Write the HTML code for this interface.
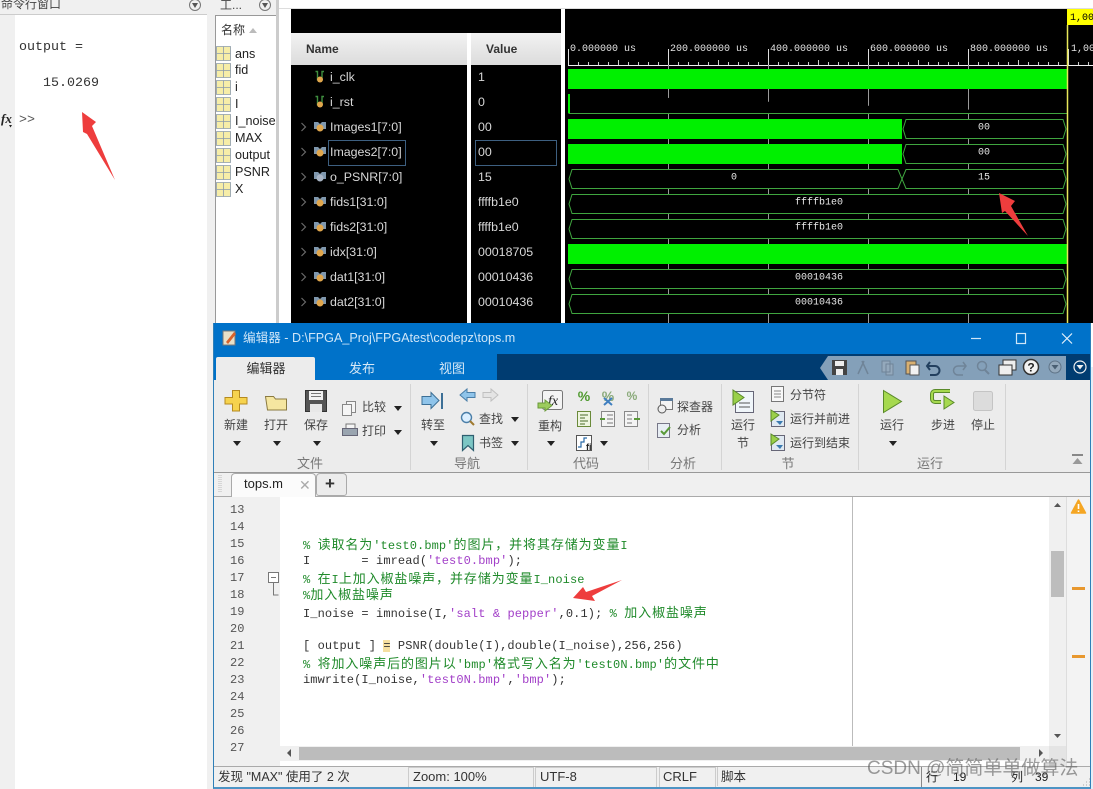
<!DOCTYPE html>
<html><head><meta charset="utf-8"><style>
html,body{margin:0;padding:0}
body{width:1093px;height:789px;position:relative;overflow:hidden;background:#fff;font-family:"Liberation Sans","Noto Sans CJK SC",sans-serif}
div,span.a{position:absolute}
.t{position:absolute;white-space:pre;line-height:16px;height:16px}
.c{transform:translateX(-50%)}
.r{font-size:12px;color:#444}
.g{font-size:13px;color:#777}
.n{font-size:12.4px;color:#d8d8d8}
.w{font-size:12.6px;color:#222}
.m{font-family:"Liberation Mono","Noto Sans CJK SC",monospace;font-size:12px;letter-spacing:.1px;color:#333}
.ln{font-family:"Liberation Mono",monospace;font-size:12px;color:#555;left:230px}
.k{color:#1f8a2a}
.s{color:#a23fc8}
.z{font-size:13px;letter-spacing:.9px;font-family:"Noto Sans CJK SC",sans-serif}
.st{font-size:13px;color:#333}
svg{position:absolute;left:0;top:0}
</style></head><body>

<!-- Left panel -->
<div style="left:0;top:0;width:207px;height:789px;background:#fff"></div>
<div style="left:0;top:0;width:15px;height:789px;background:#f0f0f0"></div>
<div style="left:0;top:0;width:207px;height:14px;background:#f0f0f0;border-bottom:1px solid #ccc"></div>
<div class="t" style="left:1px;top:-4px;font-size:12px;color:#444">命令行窗口</div>
<div class="t" style="left:19px;top:40px;font:13.33px/16px 'Liberation Mono',monospace;color:#333">output =</div>
<div class="t" style="left:43px;top:76px;font:13.33px/16px 'Liberation Mono',monospace;color:#333">15.0269</div>
<div class="t" style="left:19px;top:113px;font:13.33px/16px 'Liberation Mono',monospace;color:#555">&gt;&gt;</div>
<div class="t" style="left:1px;top:111px;font:italic bold 13px/16px 'Liberation Serif',serif;color:#222">fx</div>

<!-- Workspace -->
<div style="left:207px;top:0;width:70px;height:789px;background:#f0f0f0"></div>
<div class="t" style="left:220px;top:-3px;font-size:12px;color:#444">工...</div>
<div style="left:215px;top:15px;width:60px;height:307px;background:#fff;border:1px solid #999;border-bottom:0"></div>
<div class="t" style="left:221px;top:22px;font-size:12px;color:#333">名称</div>
<div style="left:249px;top:28px;width:0;height:0;border:4px solid transparent;border-top:0;border-bottom:5px solid #bbb"></div>
<div class="t w" style="left:235px;top:46px">ans</div>
<div class="t w" style="left:235px;top:62px">fid</div>
<div class="t w" style="left:235px;top:79px">i</div>
<div class="t w" style="left:235px;top:96px">I</div>
<div class="t w" style="left:235px;top:113px">I_noise</div>
<div class="t w" style="left:235px;top:130px">MAX</div>
<div class="t w" style="left:235px;top:147px">output</div>
<div class="t w" style="left:235px;top:164px">PSNR</div>
<div class="t w" style="left:235px;top:181px">X</div>
<div style="left:276px;top:0;width:3px;height:323px;background:#ccc"></div>

<!-- Waveform window -->
<div style="left:279px;top:0;width:814px;height:9px;background:#fff;border-bottom:1px solid #ddd;box-sizing:border-box"></div>
<div style="left:291px;top:9px;width:802px;height:314px;background:#000"></div>
<div style="left:467px;top:33px;width:4px;height:290px;background:#fff"></div>
<div style="left:561px;top:9px;width:4px;height:314px;background:#fff"></div>
<div style="left:291px;top:33px;width:176px;height:32px;background:linear-gradient(#f2f2f2,#dcdcdc)"></div>
<div style="left:471px;top:33px;width:90px;height:32px;background:linear-gradient(#f2f2f2,#dcdcdc)"></div>
<div class="t" style="left:306px;top:41px;font-size:12px;font-weight:bold;color:#333">Name</div>
<div class="t" style="left:486px;top:41px;font-size:12px;font-weight:bold;color:#333">Value</div>

<div class="t n" style="left:330px;top:69px">i_clk</div>
<div class="t n" style="left:330px;top:94px">i_rst</div>
<div class="t n" style="left:330px;top:119px">Images1[7:0]</div>
<div class="t n" style="left:330px;top:144px">Images2[7:0]</div>
<div class="t n" style="left:330px;top:169px">o_PSNR[7:0]</div>
<div class="t n" style="left:330px;top:194px">fids1[31:0]</div>
<div class="t n" style="left:330px;top:219px">fids2[31:0]</div>
<div class="t n" style="left:330px;top:244px">idx[31:0]</div>
<div class="t n" style="left:330px;top:269px">dat1[31:0]</div>
<div class="t n" style="left:330px;top:294px">dat2[31:0]</div>

<div class="t n" style="left:478px;top:69px">1</div>
<div class="t n" style="left:478px;top:94px">0</div>
<div class="t n" style="left:478px;top:119px">00</div>
<div class="t n" style="left:478px;top:144px">00</div>
<div class="t n" style="left:478px;top:169px">15</div>
<div class="t n" style="left:478px;top:194px">ffffb1e0</div>
<div class="t n" style="left:478px;top:219px">ffffb1e0</div>
<div class="t n" style="left:478px;top:244px">00018705</div>
<div class="t n" style="left:478px;top:269px">00010436</div>
<div class="t n" style="left:478px;top:294px">00010436</div>
<div style="left:328px;top:140px;width:76px;height:24px;border:1px solid #3d5f80"></div>
<div style="left:475px;top:140px;width:80px;height:24px;border:1px solid #3d5f80"></div>

<svg width="1093" height="789" viewBox="0 0 1093 789" font-family="Liberation Mono, monospace" font-size="10">
 <!-- signal icons -->
 <g fill="none" stroke="#6a6a6a" stroke-width="1.2">
  <path d="M301.500 123l4 4-4 4M301.500 148l4 4-4 4M301.500 173l4 4-4 4M301.500 198l4 4-4 4M301.500 223l4 4-4 4M301.500 248l4 4-4 4M301.500 273l4 4-4 4M301.500 298l4 4-4 4"/>
 </g>
 <g fill="none" stroke="#3f8f3f" stroke-width="1.400"><path d="M315.500 71.500h2v9M324 71.500h-2v9M315.500 96.500h2v9M324 96.500h-2v9"/></g>
 <g fill="#e0a64c"><circle cx="320" cy="79.500" r="3"/><circle cx="320" cy="104.500" r="3"/></g>
 <g fill="#7f97ad">
  <path d="M314 122h4l2 2 2-2h4v7h-12zM314 147h4l2 2 2-2h4v7h-12zM314 172h4l2 2 2-2h4v7h-12zM314 197h4l2 2 2-2h4v7h-12zM314 222h4l2 2 2-2h4v7h-12zM314 247h4l2 2 2-2h4v7h-12zM314 272h4l2 2 2-2h4v7h-12zM314 297h4l2 2 2-2h4v7h-12z"/>
 </g>
 <g fill="#e0a64c">
  <circle cx="320" cy="128" r="3.500"/><circle cx="320" cy="153" r="3.500"/><circle cx="320" cy="203" r="3.500"/><circle cx="320" cy="228" r="3.500"/><circle cx="320" cy="253" r="3.500"/><circle cx="320" cy="278" r="3.500"/><circle cx="320" cy="303" r="3.500"/>
 </g>
 <circle cx="320" cy="178" r="3.500" fill="#a8b4c4"/>

 <!-- timeline -->
 <path d="M568 65.500H1093" stroke="#eee"/>
 <path d="M568.500 49V65M668.500 49V65M768.500 49V65M868.500 49V65M968.500 49V65M1068.500 49V65" stroke="#ddd"/>
 <path d="M578.500 62V65M588.500 62V65M598.500 62V65M608.500 62V65M618.500 60V65M628.500 62V65M638.500 62V65M648.500 62V65M658.500 62V65M678.500 62V65M688.500 62V65M698.500 62V65M708.500 62V65M718.500 60V65M728.500 62V65M738.500 62V65M748.500 62V65M758.500 62V65M778.500 62V65M788.500 62V65M798.500 62V65M808.500 62V65M818.500 60V65M828.500 62V65M838.500 62V65M848.500 62V65M858.500 62V65M878.500 62V65M888.500 62V65M898.500 62V65M908.500 62V65M918.500 60V65M928.500 62V65M938.500 62V65M948.500 62V65M958.500 62V65M978.500 62V65M988.500 62V65M998.500 62V65M1008.500 62V65M1018.500 60V65M1028.500 62V65M1038.500 62V65M1048.500 62V65M1058.500 62V65M1078.500 62V65M1088.500 62V65" stroke="#ccc"/>
 <g fill="#e4e4e4">
  <text x="570" y="51">0.000000 us</text><text x="670" y="51">200.000000 us</text><text x="770" y="51">400.000000 us</text><text x="870" y="51">600.000000 us</text><text x="970" y="51">800.000000 us</text><text x="1071" y="51">1,000</text>
 </g>
 <!-- grid -->
 <path d="M668.500 65V323M768.500 65V323M868.500 65V323M968.500 65V323" stroke="#9a9a9a"/>
 <!-- signals -->
 <g fill="#00f000">
  <rect x="568" y="69" width="499" height="20"/>
  <rect x="568" y="119" width="334" height="20"/>
  <rect x="568" y="144" width="334" height="20"/>
  <rect x="568" y="244" width="499" height="20"/>
 </g>
 <g fill="#000" stroke="#3fa53f" stroke-width="1">
  <path d="M569 94V113.500H1067" />
  <path d="M903 129l3-9.500H1063l3 9.500-3 9.500H906z"/>
  <path d="M903 154l3-9.500H1063l3 9.500-3 9.500H906z"/>
  <path d="M569 179l3-9.500H898l4 9.500-4 9.500H572z"/>
  <path d="M902 179l4-9.500H1063l3 9.500-3 9.500H906z"/>
  <path d="M569 204l3-9.500H1063l3 9.500-3 9.500H572z"/>
  <path d="M569 229l3-9.500H1063l3 9.500-3 9.500H572z"/>
  <path d="M569 279l3-9.500H1063l3 9.500-3 9.500H572z"/>
  <path d="M569 304l3-9.500H1063l3 9.500-3 9.500H572z"/>
 </g>
 <path d="M569 94V113" stroke="#00f000" stroke-width="2"/>
 <g fill="#e8e8e8" text-anchor="middle">
  <text x="984" y="129.500">00</text><text x="984" y="154.500">00</text><text x="734" y="179.500">0</text><text x="984" y="179.500">15</text>
  <text x="819" y="204.500">ffffb1e0</text><text x="819" y="229.500">ffffb1e0</text><text x="819" y="279.500">00010436</text><text x="819" y="304.500">00010436</text>
 </g>
 <path d="M1067.500 25V323" stroke="#e8e85a" stroke-width="1.500"/>
 <rect x="1067" y="9" width="26" height="16" fill="#ffff00"/>
 <text x="1070" y="20" fill="#000">1,00</text>
 <!-- dropdown circles -->
 <g fill="none" stroke="#777">
  <circle cx="195" cy="5" r="5.500"/><circle cx="265" cy="5" r="5.500"/>
 </g>
 <path d="M192 3h6l-3 5zM262 3h6l-3 5z" fill="#555"/>
 <!-- variable icons -->
 <g id="v" fill="#f6eda8" stroke="#8a9aaa" stroke-width=".8">
  <path d="M216.500 46.500h14v14h-14zM216.500 63.500h14v14h-14zM216.500 80.500h14v14h-14zM216.500 97.500h14v14h-14zM216.500 114.500h14v14h-14zM216.500 131.500h14v14h-14zM216.500 148.500h14v14h-14zM216.500 165.500h14v14h-14zM216.500 182.500h14v14h-14z"/>
  <path fill="none" d="M216.500 53.500h14M223.500 46.500v14M216.500 70.500h14M223.500 63.500v14M216.500 87.500h14M223.500 80.500v14M216.500 104.500h14M223.500 97.500v14M216.500 121.500h14M223.500 114.500v14M216.500 138.500h14M223.500 131.500v14M216.500 155.500h14M223.500 148.500v14M216.500 172.500h14M223.500 165.500v14M216.500 189.500h14M223.500 182.500v14"/>
 </g>
 <path d="M9 125l3 0-1.500 2.500z" fill="#222"/>
</svg>

<!-- Editor window -->
<div style="left:1091px;top:367px;width:2px;height:422px;background:#e6eef6"></div>
<div style="left:213px;top:323px;width:878px;height:466px;background:#f0f0f0;box-sizing:border-box;border-left:1px solid #2f7fb8;border-right:1px solid #2f7fb8;border-bottom:2px solid #4d94c4"></div>
<div style="left:214px;top:323px;width:876px;height:31px;background:#0072c9"></div>
<div style="left:214px;top:354px;width:876px;height:26px;background:#0072c9"></div>
<div style="left:497px;top:354px;width:593px;height:26px;background:#003c71"></div>
<div style="left:828px;top:356px;width:238px;height:24px;background:#84a0b9"></div>
<div style="left:216px;top:357px;width:99px;height:23px;background:#ececec;border-radius:2px 2px 0 0"></div>
<div class="t" style="left:243px;top:330px;font-size:12.6px;color:#cfe6f8">编辑器 - D:\FPGA_Proj\FPGAtest\codepz\tops.m</div>
<div class="t c" style="left:266px;top:361px;font-size:13px;color:#333">编辑器</div>
<div class="t c" style="left:362px;top:361px;font-size:13px;color:#d6e8f6">发布</div>
<div class="t c" style="left:452px;top:361px;font-size:13px;color:#d6e8f6">视图</div>

<!-- Ribbon -->
<div style="left:214px;top:380px;width:876px;height:92px;background:#ececec;border-bottom:1px solid #999"></div>
<div style="left:410px;top:384px;width:1px;height:86px;background:#d4d4d4"></div>
<div style="left:527px;top:384px;width:1px;height:86px;background:#d4d4d4"></div>
<div style="left:648px;top:384px;width:1px;height:86px;background:#d4d4d4"></div>
<div style="left:721px;top:384px;width:1px;height:86px;background:#d4d4d4"></div>
<div style="left:858px;top:384px;width:1px;height:86px;background:#d4d4d4"></div>
<div style="left:1005px;top:384px;width:1px;height:86px;background:#d4d4d4"></div>

<div class="t r c" style="left:236px;top:417px">新建</div>
<div class="t r c" style="left:276px;top:417px">打开</div>
<div class="t r c" style="left:316px;top:417px">保存</div>
<div class="t r" style="left:362px;top:399px">比较</div>
<div class="t r" style="left:362px;top:423px">打印</div>
<div class="t g c" style="left:310px;top:456px">文件</div>
<div class="t r c" style="left:433px;top:417px">转至</div>
<div class="t r" style="left:479px;top:411px">查找</div>
<div class="t r" style="left:479px;top:435px">书签</div>
<div class="t g c" style="left:467px;top:456px">导航</div>
<div class="t r c" style="left:550px;top:418px">重构</div>
<div class="t g c" style="left:586px;top:456px">代码</div>
<div class="t r" style="left:677px;top:399px">探查器</div>
<div class="t r" style="left:677px;top:422px">分析</div>
<div class="t g c" style="left:683px;top:456px">分析</div>
<div class="t r c" style="left:743px;top:417px">运行</div>
<div class="t r c" style="left:743px;top:435px">节</div>
<div class="t r" style="left:790px;top:387px">分节符</div>
<div class="t r" style="left:790px;top:411px">运行并前进</div>
<div class="t r" style="left:790px;top:435px">运行到结束</div>
<div class="t g c" style="left:788px;top:456px">节</div>
<div class="t r c" style="left:892px;top:417px">运行</div>
<div class="t r c" style="left:943px;top:417px">步进</div>
<div class="t r c" style="left:983px;top:417px">停止</div>
<div class="t g c" style="left:930px;top:456px">运行</div>

<!-- Tab strip -->
<div style="left:231px;top:473px;width:85px;height:24px;background:#fbfbfb;border:1px solid #aaa;border-bottom:0;border-radius:4px 4px 0 0;box-sizing:border-box"></div>
<div style="left:316px;top:473px;width:31px;height:23px;background:#ececec;border:1px solid #aaa;border-radius:4px 4px 3px 3px;box-sizing:border-box"></div>
<div class="t" style="left:244px;top:476px;font-size:13px;color:#222">tops.m</div>
<div class="t" style="left:299px;top:477px;font-size:14px;color:#aaa">✕</div>
<div class="t" style="left:325px;top:476px;font-size:17px;font-weight:bold;color:#333">+</div>
<div style="left:214px;top:496px;width:17px;height:1px;background:#aaa"></div>
<div style="left:316px;top:496px;width:774px;height:1px;background:#aaa"></div>

<!-- Editor area -->
<div style="left:214px;top:497px;width:66px;height:269px;background:#f0f0f0"></div>
<div style="left:280px;top:497px;width:769px;height:269px;background:#fff"></div>
<div style="left:852px;top:497px;width:1px;height:249px;background:#bbb"></div>
<div style="left:1049px;top:497px;width:17px;height:269px;background:#f0f0f0"></div>
<div style="left:1066px;top:497px;width:24px;height:269px;background:#f3f3f3;border-left:1px solid #ddd;box-sizing:border-box"></div>
<div style="left:1051px;top:551px;width:13px;height:46px;background:#bdbdbd"></div>
<div style="left:280px;top:746px;width:769px;height:15px;background:#f0f0f0"></div>
<div style="left:299px;top:747px;width:721px;height:13px;background:#bcbcbc"></div>
<div style="left:1049px;top:746px;width:17px;height:20px;background:#e4e4e4"></div>
<div style="left:214px;top:766px;width:876px;height:21px;background:#f0f0f0;border-top:1px solid #aaa;box-sizing:border-box"></div>
<div style="left:383px;top:640px;width:7px;height:12px;background:#f6dfa0"></div>

<div class="t ln" style="top:502px">13</div>
<div class="t ln" style="top:519px">14</div>
<div class="t ln" style="top:536px">15</div>
<div class="t ln" style="top:553px">16</div>
<div class="t ln" style="top:570px">17</div>
<div class="t ln" style="top:587px">18</div>
<div class="t ln" style="top:604px">19</div>
<div class="t ln" style="top:621px">20</div>
<div class="t ln" style="top:638px">21</div>
<div class="t ln" style="top:655px">22</div>
<div class="t ln" style="top:672px">23</div>
<div class="t ln" style="top:689px">24</div>
<div class="t ln" style="top:706px">25</div>
<div class="t ln" style="top:723px">26</div>
<div class="t ln" style="top:740px">27</div>

<div class="t m k" style="left:303px;top:536px">% <span class="z">读取名为</span>'test0.bmp'<span class="z">的图片，并将其存储为变量</span>I</div>
<div class="t m" style="left:303px;top:553px">I       = imread(<span class="s">'test0.bmp'</span>);</div>
<div class="t m k" style="left:303px;top:570px">% <span class="z">在</span>I<span class="z">上加入椒盐噪声，并存储为变量</span>I_noise</div>
<div class="t m k" style="left:303px;top:586px">%<span class="z">加入椒盐噪声</span></div>
<div class="t m" style="left:303px;top:604px">I_noise = imnoise(I,<span class="s">'salt &amp; pepper'</span>,0.1); <span class="k">% <span class="z">加入椒盐噪声</span></span></div>
<div class="t m" style="left:303px;top:638px">[ output ] = PSNR(double(I),double(I_noise),256,256)</div>
<div class="t m k" style="left:303px;top:655px">% <span class="z">将加入噪声后的图片以</span>'bmp'<span class="z">格式写入名为</span>'test0N.bmp'<span class="z">的文件中</span></div>
<div class="t m" style="left:303px;top:672px">imwrite(I_noise,<span class="s">'test0N.bmp'</span>,<span class="s">'bmp'</span>);</div>

<!-- Status -->
<div class="t" style="left:218px;top:769px;font-size:12.5px;color:#333">发现 "MAX" 使用了 2 次</div>
<div style="left:408px;top:767px;width:124px;height:19px;border:1px solid #ccc;border-width:1px 1px 0 1px"></div>
<div style="left:535px;top:767px;width:120px;height:19px;border:1px solid #ccc;border-width:1px 1px 0 1px"></div>
<div style="left:659px;top:767px;width:55px;height:19px;border:1px solid #ccc;border-width:1px 1px 0 1px"></div>
<div style="left:717px;top:767px;width:203px;height:19px;border-left:1px solid #ccc"></div>
<div style="left:921px;top:767px;width:1px;height:20px;background:#888"></div>
<div class="t st" style="left:413px;top:769px">Zoom: 100%</div>
<div class="t st" style="left:540px;top:769px">UTF-8</div>
<div class="t st" style="left:663px;top:769px">CRLF</div>
<div class="t" style="left:721px;top:769px;font-size:12.5px;color:#333">脚本</div>
<div class="t" style="left:926px;top:769px;font-size:12px;color:#222">行</div>
<div class="t" style="left:953px;top:769px;font-size:12px;color:#222">19</div>
<div class="t" style="left:1011px;top:769px;font-size:12px;color:#222">列</div>
<div class="t" style="left:1035px;top:769px;font-size:12px;color:#222">39</div>

<svg width="1093" height="789" viewBox="0 0 1093 789">
 <!-- title icon -->
 <path d="M223 331h12v14h-12z" fill="#e8e0c8" stroke="#777"/>
 <path d="M226 342l8-10 2 2-8 10z" fill="#d9622b"/>
 <!-- window controls -->
 <path d="M971 338.500h10" stroke="#cfe6f8" stroke-width="1.200"/>
 <rect x="1016.500" y="333.500" width="9" height="10" fill="none" stroke="#cfe6f8" stroke-width="1.200"/>
 <path d="M1062 333.500l10 10M1072 333.500l-10 10" stroke="#e4f1fb" stroke-width="1.200"/>
 <!-- quick access -->
 <path d="M828 356l-8 12 8 12z" fill="#84a0b9"/>
 <rect x="832" y="360" width="15" height="15" fill="#444"/><rect x="835" y="361" width="9" height="5" fill="#eee"/><rect x="836" y="369" width="7" height="6" fill="#eee"/>
 <path d="M858 374l6-13M868 374l-6-13" stroke="#6f8498" stroke-width="1.500"/>
 <path d="M882 361h8v11h-8zM886 364h7v11h-7z" fill="#94a9bc" stroke="#6f8498"/>
 <rect x="906" y="361" width="10" height="13" fill="#d9b070" stroke="#555"/><rect x="910" y="365" width="9" height="10" fill="#f2f2f2" stroke="#555"/>
 <path d="M930 362l-3 4 3 4M927 366h8a4.500 4.500 0 0 1 0 9h-5" fill="none" stroke="#23405f" stroke-width="2"/>
 <path d="M963 362l3 4-3 4M966 366h-8a4.500 4.500 0 0 0 0 9h5" fill="none" stroke="#6f8498" stroke-width="1.500"/>
 <circle cx="982" cy="366" r="4.500" fill="none" stroke="#6f8498" stroke-width="1.500"/><path d="M985 370l4 4" stroke="#6f8498" stroke-width="2"/>
 <rect x="1003" y="360" width="13" height="10" fill="#eee" stroke="#333"/><rect x="999" y="365" width="13" height="10" fill="#eee" stroke="#333"/>
 <circle cx="1031" cy="367" r="7.500" fill="#f2f2f2" stroke="#333" stroke-width="1.500"/>
 <text x="1031" y="371.500" font-size="12" font-weight="bold" font-family="Liberation Sans, sans-serif" text-anchor="middle" fill="#222">?</text>
 <circle cx="1055" cy="367" r="6" fill="#94a9bc" stroke="#5f7488"/><path d="M1051.500 365h7l-3.500 4.500z" fill="#4a5f73"/>
 <circle cx="1080" cy="367" r="6" fill="none" stroke="#f0f0f0" stroke-width="1.200"/><path d="M1076.500 365h7l-3.500 4.500z" fill="#f0f0f0"/>

 <!-- dropdown arrows -->
 <path d="M233 441h8l-4 5zM273 441h8l-4 5zM313 441h8l-4 5zM394 406h8l-4 5zM394 430h8l-4 5zM430 441h8l-4 5zM511 417h8l-4 5zM511 441h8l-4 5zM547 441h8l-4 5zM600 441h8l-4 5zM889 441h8l-4 5z" fill="#222"/>
 <!-- new -->
 <path d="M232.500 390.500h7v7h7.500v6.500h-7.500v7h-7v-7h-7.500v-6.500h7.500z" fill="#f6d34e" stroke="#b58a20"/>
 <!-- open -->
 <path d="M265.500 396.500h8l2 2.500h11v11h-19z" fill="#f5e6a0" stroke="#8a7a40"/>
 <!-- save -->
 <rect x="305.500" y="390.500" width="21" height="21" fill="#555" stroke="#333"/><rect x="309" y="391" width="14" height="9" fill="#f2f2f2"/><rect x="310" y="404" width="12" height="8" fill="#e8e8e8"/><rect x="311" y="393" width="10" height="1" fill="#777"/><rect x="311" y="396" width="10" height="1" fill="#777"/>
 <!-- compare -->
 <path d="M346.500 401.500h9v11h-9z" fill="#f5f5f5" stroke="#888"/><path d="M342.500 404.500h9v11h-9z" fill="#f5f5f5" stroke="#888"/>
 <!-- print -->
 <rect x="346" y="424" width="9" height="5" fill="#f5f5f5" stroke="#777"/><rect x="342.500" y="428.500" width="15" height="7" fill="#9aa5b0" stroke="#667"/>
 <!-- goto -->
 <path d="M422 396.500h9v-4l8 8-8 8v-4h-9z" fill="#8fc4ea" stroke="#3c6f96"/><rect x="441" y="393" width="2" height="16" fill="#3c6f96"/>
 <!-- back / forward -->
 <path d="M460 395l7-6v3.500h8v5h-8v3.500z" fill="#8fc4ea" stroke="#4a7ea8"/>
 <path d="M498 395l-7-6v3.500h-8v5h8v3.500z" fill="#e4e4e4" stroke="#c0c0c0"/>
 <!-- find -->
 <circle cx="466.500" cy="417.500" r="5" fill="#dcefff" stroke="#4a7ea8" stroke-width="1.400"/><path d="M470 421l4 4" stroke="#a07a30" stroke-width="2"/>
 <!-- bookmark -->
 <path d="M462.500 435.500h11v15l-5.500-5-5.500 5z" fill="#7cc6c4" stroke="#2f5f70" stroke-width="1.200"/>
 <!-- refactor -->
 <rect x="542.500" y="390.500" width="20" height="19" rx="2" fill="#f4f4f4" stroke="#777"/>
 <text x="553" y="405" font-size="14" font-style="italic" font-family="Liberation Serif, serif" text-anchor="middle" fill="#222">fx</text>
 <path d="M538 403h7v-3l7 5.500-7 5.500v-3h-7z" fill="#9ccc5c" stroke="#6a9a3a"/>
 <!-- code group -->
 <g font-family="Liberation Sans, sans-serif" font-size="14" font-weight="bold" text-anchor="middle">
  <text x="584" y="401" fill="#4f9a2f">%</text>
  <text x="608" y="401" fill="#8aaa7a">%</text>
  <text x="632" y="400" fill="#8aaa7a" font-size="12">%</text>
 </g>
 <path d="M604 398l8 7M612 398l-8 7" stroke="#3f7fc0" stroke-width="2"/>
 <rect x="577.500" y="411.500" width="13" height="15" fill="#eef5e0" stroke="#6a8a3a"/><path d="M580 415h8M580 418h5M580 421h8M580 424h5" stroke="#4a6a2a"/>
 <rect x="601.500" y="411.500" width="13" height="15" fill="#f4f4f4" stroke="#888"/><path d="M607 415h6M607 419h6M607 423h6" stroke="#777"/><path d="M600 419h5" stroke="#5a9a3a" stroke-width="2"/>
 <rect x="624.500" y="411.500" width="13" height="15" fill="#f4f4f4" stroke="#888"/><path d="M627 415h5M627 419h5M627 423h5" stroke="#777"/><path d="M634 419h6" stroke="#5a9a3a" stroke-width="2"/>
 <rect x="576.500" y="435.500" width="15" height="15" fill="#fff" stroke="#555"/><path d="M578 447h3v-5h3v-4h3" fill="none" stroke="#2a6aa8" stroke-width="1.200"/>
 <text x="586" y="450" font-size="9" font-weight="bold" font-family="Liberation Sans, sans-serif" fill="#222">fi</text>
 <!-- analysis -->
 <rect x="660.500" y="398.500" width="12" height="11" fill="#f4f4f4" stroke="#777"/><rect x="660" y="398" width="13" height="3" fill="#5a7a9a"/><circle cx="662" cy="409" r="4" fill="#eee" stroke="#555"/>
 <rect x="657.500" y="423.500" width="12" height="14" fill="#e8eef4" stroke="#778"/><path d="M661 431l3 3 6-7" fill="none" stroke="#5a9a3a" stroke-width="2"/>
 <!-- run section -->
 <rect x="735.500" y="391.500" width="18" height="21" fill="#f0f6fa" stroke="#667"/><path d="M739 403h11M739 407h11" stroke="#555"/>
 <path d="M733 390l11 7.500-11 7.500z" fill="#9ad04a" stroke="#5a8a2a"/>
 <rect x="771.500" y="386.500" width="12" height="15" fill="#f8f8f8" stroke="#777"/><path d="M774 391h7M774 394h7M774 397h7" stroke="#888"/>
 <rect x="771.500" y="411.500" width="13" height="15" fill="#dfe9f2" stroke="#667"/><path d="M771 410l8 5-8 6z" fill="#9ad04a" stroke="#5a8a2a"/><path d="M776 421h7l-3 4z" fill="#3a7ab0"/>
 <rect x="771.500" y="435.500" width="13" height="15" fill="#dfe9f2" stroke="#667"/><path d="M771 434l8 5-8 6z" fill="#9ad04a" stroke="#5a8a2a"/><path d="M776 445h7l-3 4z" fill="#3a7ab0"/>
 <!-- run -->
 <path d="M883.500 390.500l18 11-18 11z" fill="#a6d94f" stroke="#5a8a2a"/>
 <path d="M950 391h-15a3 3 0 0 0 -3 3v5a3 3 0 0 0 3 3h6" fill="none" stroke="#5a8a2a" stroke-width="4"/>
 <path d="M950 391h-15a3 3 0 0 0 -3 3v5a3 3 0 0 0 3 3h6" fill="none" stroke="#a6d94f" stroke-width="2"/>
 <path d="M944 396l10 6.500-10 6.500z" fill="#a6d94f" stroke="#5a8a2a"/>
 <rect x="973.500" y="391.500" width="19" height="19" rx="2" fill="#dcdcdc" stroke="#c4c4c4"/>
 <!-- collapse -->
 <path d="M1072 455h11" stroke="#888" stroke-width="2"/><path d="M1072.500 464l5-6 5 6z" fill="#999"/>
 <!-- grip -->
 <path d="M219 475v18M221 475v18" stroke="#bbb" stroke-dasharray="1 1"/>
 <!-- fold -->
 <rect x="268.500" y="572.500" width="10" height="10" fill="#fff" stroke="#777"/><path d="M271 577.500h5" stroke="#777"/>
 <path d="M273.500 583v12h5" fill="none" stroke="#777"/>
 <!-- scroll arrows -->
 <path d="M1057.500 503l-3.500 4h7zM1057.500 738l-3.500-4h7zM287 753l4-4v8zM1043 753l-4-4v8z" fill="#555"/>
 <!-- warning -->
 <path d="M1078.500 500l7 13h-14z" fill="#f5a623" stroke="#f5a623" stroke-width="1.500" stroke-linejoin="round"/>
 <path d="M1078.500 504v5M1078.500 510.500v1.500" stroke="#fff" stroke-width="1.600"/>
 <rect x="1072" y="587" width="13" height="3" fill="#e8982e"/><rect x="1072" y="655" width="13" height="3" fill="#e8982e"/>
 <!-- status grip -->
 <path d="M1083 785h1M1086 785h1M1089 785h1M1086 782h1M1089 782h1M1089 779h1" stroke="#aaa"/>
 <!-- red arrows -->
 <path d="M82 112L96 122 92 126 115 180 87 134 83 132z" fill="#ee3d3d"/>
 <path d="M999 193L1015 201 1011 206 1028 236 1005 211 1002 213z" fill="#ee3d3d"/>
 <path d="M573 598L583 587 586 592 622 580 592 596 595 601z" fill="#ee3d3d"/>
</svg>

<div class="t" style="left:867px;top:761px;font-size:19px;color:rgba(90,90,90,.6)">CSDN @简简单单做算法</div>
</body></html>
